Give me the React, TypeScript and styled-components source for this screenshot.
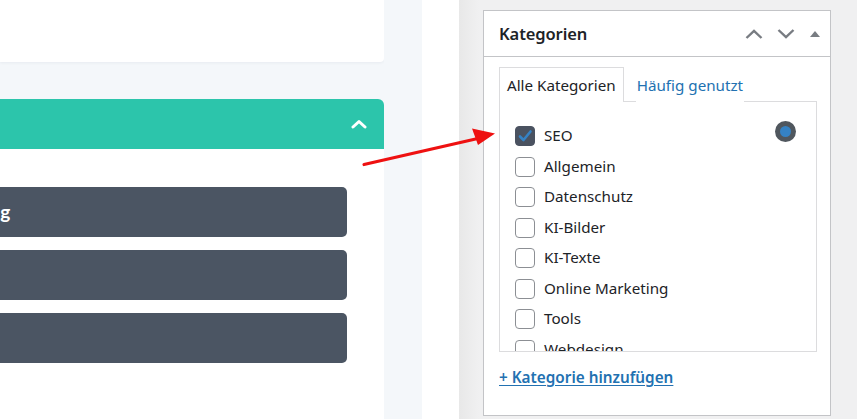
import React from "react";
import styled, { createGlobalStyle } from "styled-components";

const Global = createGlobalStyle`
  html, body { margin: 0; padding: 0; }
  body { width: 857px; height: 419px; overflow: hidden; background: #fff; }
  #root { height: 419px; }
  * { box-sizing: border-box; }
`;

const Page = styled.div`
  position: relative;
  display: flex;
  width: 857px;
  height: 419px;
  font-family: "Noto Sans", "Open Sans", sans-serif;
`;

const MainCol = styled.div`
  width: 384px;
  display: flex;
  flex-direction: column;
  background: #f4f7fa;
`;

const TopCard = styled.div`
  height: 62px;
  background: #fff;
  border-bottom-right-radius: 4px;
  box-shadow: 0 1px 3px rgba(30, 50, 80, 0.06);
  margin-bottom: 37px;
`;

const AccordionHead = styled.div`
  height: 50px;
  background: #2cc5ab;
  border-top-right-radius: 6px;
  display: flex;
  align-items: center;
  justify-content: flex-end;
  padding-right: 17px;
`;

const AccordionBody = styled.div`
  flex: 1;
  background: #fff;
  padding: 38px 37px 0 0;
  display: flex;
  flex-direction: column;
  gap: 13px;
`;

const DarkButton = styled.div`
  height: 50px;
  background: #4b5563;
  border-radius: 0 5px 5px 0;
  display: flex;
  align-items: center;
  overflow: hidden;
  color: #fff;
  font-family: Lato, "Noto Sans", sans-serif;
  font-weight: 700;
  font-size: 19px;
  white-space: nowrap;
`;

const ButtonLabel = styled.span<{ $shift: number }>`
  margin-left: ${(p) => -p.$shift}px;
  margin-top: -2px;
`;

const LightStrip = styled.div`
  width: 38px;
  background: #f4f7fa;
`;

const WhiteStrip = styled.div`
  width: 37px;
  background: #fff;
`;

const Sidebar = styled.div`
  flex: 1;
  background: linear-gradient(to right, #e8e8e8, #f0f0f1 20px);
  padding: 10px 0 0 24px;
`;

const Panel = styled.div`
  width: 348px;
  height: 406px;
  background: #fff;
  border: 1px solid #c3c4c7;
  display: flex;
  flex-direction: column;
`;

const PanelHeader = styled.div`
  height: 46px;
  border-bottom: 1px solid #c3c4c7;
  display: flex;
  align-items: center;
  padding: 0 9px 0 15px;
`;

const PanelTitle = styled.h2`
  margin: 0;
  flex: 1;
  font-size: 16.5px;
  font-weight: 600;
  color: #1d2327;
  letter-spacing: -0.1px;
`;

const HeaderIcons = styled.div`
  display: flex;
  align-items: center;
  gap: 14px;
  color: #787c82;
`;

const PanelBody = styled.div`
  padding: 10px 13px 0 15px;
  display: flex;
  flex-direction: column;
`;

const Tabs = styled.div`
  display: flex;
  align-items: flex-end;
  gap: 12px;
  height: 34px;
`;

const Tab = styled.div<{ $active?: boolean }>`
  height: 35px;
  padding: 0 ${(p) => (p.$active ? "7px" : "0")};
  display: flex;
  align-items: center;
  font-size: 15.2px;
  color: ${(p) => (p.$active ? "#1d2327" : "#2271b1")};
  background: #fff;
  border: ${(p) => (p.$active ? "1px solid #dcdcde" : "1px solid transparent")};
  border-bottom: none;
  margin-bottom: -1px;
  position: relative;
  z-index: 1;
`;

const TabBox = styled.div`
  position: relative;
  width: 318px;
  height: 251px;
  border: 1px solid #dcdcde;
  overflow: hidden;
  padding: 24px 0 0 15px;
`;

const CatList = styled.ul`
  list-style: none;
  margin: 0;
  padding: 0;
`;

const CatRow = styled.li`
  height: 30.57px;
  display: flex;
  align-items: flex-start;
  gap: 9px;
  font-size: 15.2px;
  color: #1d2327;
`;

const Box = styled.span<{ $checked?: boolean }>`
  width: 20px;
  height: 20px;
  flex: none;
  border-radius: 4px;
  border: 1px solid ${(p) => (p.$checked ? "#4a5260" : "#8c8f94")};
  background: ${(p) => (p.$checked ? "#4a5260" : "#fff")};
  display: flex;
  align-items: center;
  justify-content: center;
`;

const CatText = styled.span`
  line-height: 20px;
  margin-top: -1px;
`;

const RadioDot = styled.span`
  position: absolute;
  top: 19px;
  right: 20px;
  width: 21px;
  height: 21px;
  border-radius: 50%;
  background: #50575e;
  display: flex;
  align-items: center;
  justify-content: center;
  &::after {
    content: "";
    width: 11px;
    height: 11px;
    border-radius: 50%;
    background: #3582c4;
  }
`;

const AddLink = styled.a`
  margin-top: 15px;
  font-size: 15.3px;
  font-weight: 600;
  color: #2271b1;
  text-decoration: underline;
  text-underline-offset: 2px;
  align-self: flex-start;
`;

const ArrowLayer = styled.svg`
  position: absolute;
  left: 0;
  top: 0;
  pointer-events: none;
`;

const cats = [
  { name: "SEO", checked: true },
  { name: "Allgemein" },
  { name: "Datenschutz" },
  { name: "KI-Bilder" },
  { name: "KI-Texte" },
  { name: "Online Marketing" },
  { name: "Tools" },
  { name: "Webdesign" },
];

export default function App() {
  return (
    <Page>
      <Global />
      <MainCol>
        <TopCard />
        <AccordionHead>
          <svg width="16" height="10" viewBox="0 0 16 10">
            <path d="M2 8 L8 2.5 L14 8" fill="none" stroke="#fff" strokeWidth="3" strokeLinecap="round" strokeLinejoin="round" />
          </svg>
        </AccordionHead>
        <AccordionBody>
          <DarkButton>
            <ButtonLabel $shift={106}>Weiterleitung</ButtonLabel>
          </DarkButton>
          <DarkButton />
          <DarkButton />
        </AccordionBody>
      </MainCol>
      <LightStrip />
      <WhiteStrip />
      <Sidebar>
        <Panel>
          <PanelHeader>
            <PanelTitle>Kategorien</PanelTitle>
            <HeaderIcons>
              <svg width="18" height="12" viewBox="0 0 18 12">
                <path d="M1.5 10 L9 2.8 L16.5 10" fill="none" stroke="#787c82" strokeWidth="2.4" />
              </svg>
              <svg width="18" height="12" viewBox="0 0 18 12">
                <path d="M1.5 2 L9 9.2 L16.5 2" fill="none" stroke="#787c82" strokeWidth="2.4" />
              </svg>
              <svg width="12" height="12" viewBox="0 0 12 12">
                <path d="M1 9 L6 3 L11 9 Z" fill="#787c82" />
              </svg>
            </HeaderIcons>
          </PanelHeader>
          <PanelBody>
            <Tabs>
              <Tab $active>Alle Kategorien</Tab>
              <Tab>Häufig genutzt</Tab>
            </Tabs>
            <TabBox>
              <CatList>
                {cats.map((c) => (
                  <CatRow key={c.name}>
                    <Box $checked={c.checked}>
                      {c.checked && (
                        <svg width="16" height="16" viewBox="0 0 16 16">
                          <path d="M3 8.5 L6.5 12 L13.5 3.5" fill="none" stroke="#3582c4" strokeWidth="2.6" strokeLinecap="round" strokeLinejoin="round" />
                        </svg>
                      )}
                    </Box>
                    <CatText>{c.name}</CatText>
                  </CatRow>
                ))}
              </CatList>
              <RadioDot />
            </TabBox>
            <AddLink href="#">+ Kategorie hinzufügen</AddLink>
          </PanelBody>
        </Panel>
      </Sidebar>
      <ArrowLayer width="857" height="419" viewBox="0 0 857 419">
        <line x1="364" y1="164.5" x2="480" y2="138" stroke="#ee1111" strokeWidth="3.2" strokeLinecap="round" />
        <path d="M495 133.5 L472 128.5 L478 145 Z" fill="#ee1111" />
      </ArrowLayer>
    </Page>
  );
}
